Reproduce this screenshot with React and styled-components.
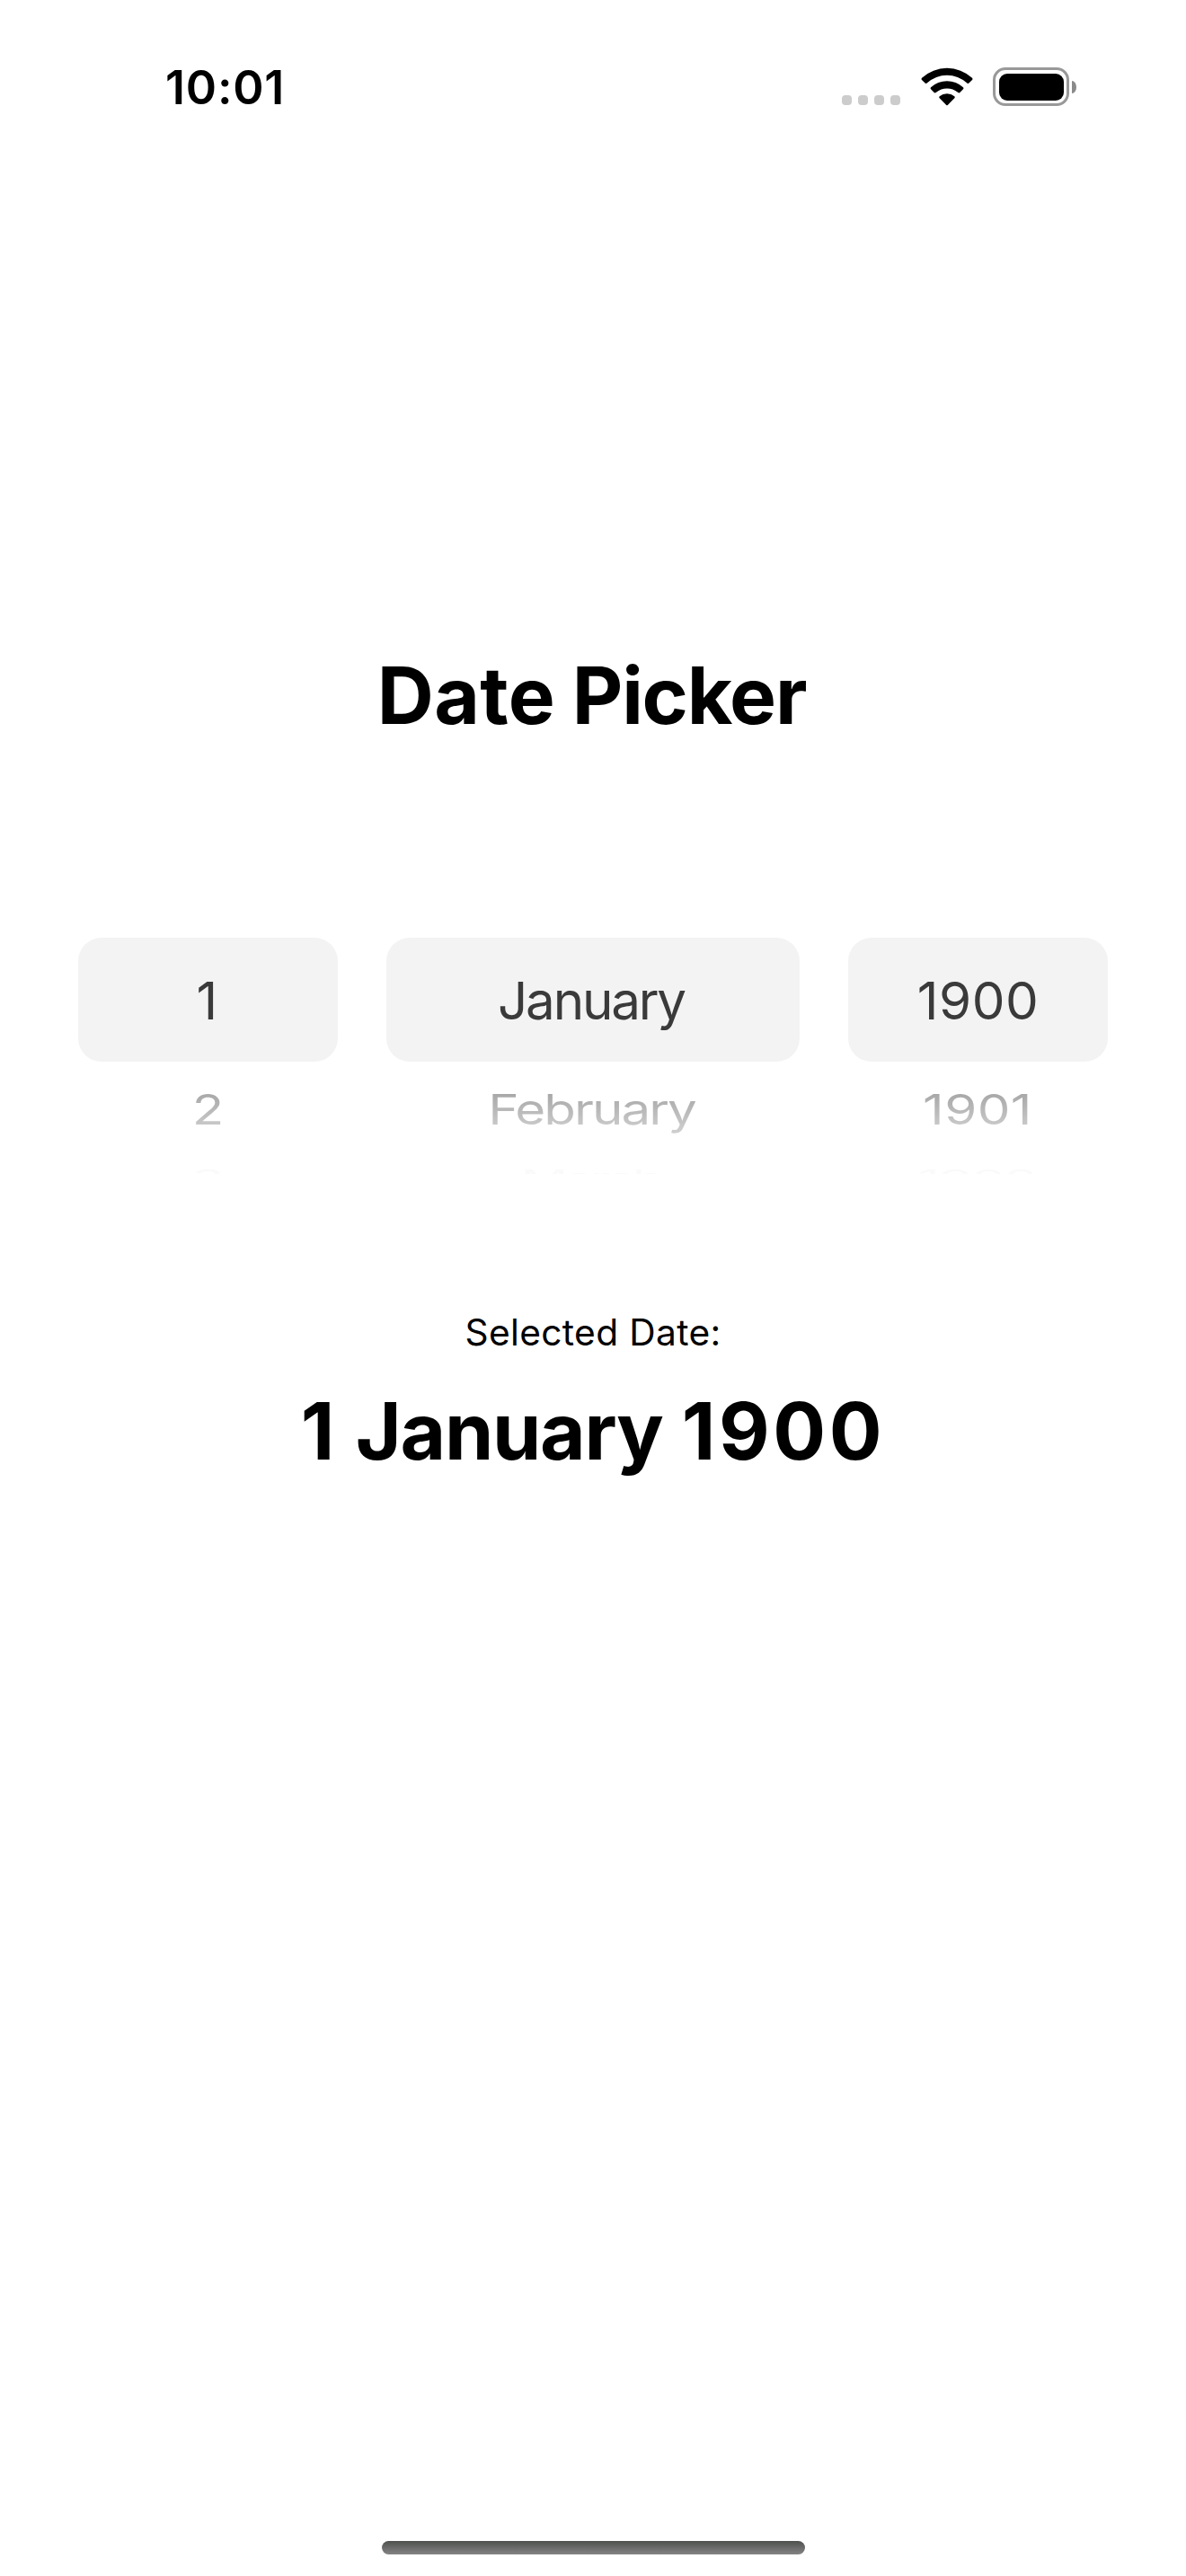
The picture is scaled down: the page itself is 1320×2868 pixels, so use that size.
import React from "react";
import styled, { createGlobalStyle } from "styled-components";

const GlobalStyle = createGlobalStyle`
  *, *::before, *::after { box-sizing: border-box; }
  body { margin: 0; background: #fff; }
`;

const Screen = styled.main`
  display: flex;
  flex-direction: column;
  align-items: center;
  width: 1320px;
  height: 2868px;
  padding-bottom: 24px;
  overflow: hidden;
  background: #fff;
  color: #000;
  font-family: Inter, "Liberation Sans", sans-serif;
`;

const StatusBar = styled.header`
  display: flex;
  align-items: center;
  justify-content: space-between;
  width: 100%;
  height: 196px;
  padding: 0 122px 0 184px;
`;

const Clock = styled.time`
  font-size: 52px;
  font-weight: 600;
  line-height: 64px;
  letter-spacing: 0.8px;
`;

const StatusIcons = styled.div`
  display: flex;
  align-items: center;
`;

const SignalDots = styled.div`
  display: flex;
  gap: 7px;
  margin: 27px 23px 0 0;
`;

const SignalDot = styled.i`
  width: 11px;
  height: 11px;
  border-radius: 4px;
  background: #ccc;
`;

const WifiIcon = styled.svg`
  width: 58px;
  height: 43px;
  margin: -3px 22px 0 0;
`;

const Battery = styled.div`
  display: flex;
  align-items: center;
  margin-top: -3px;
`;

const BatteryShell = styled.div`
  width: 85px;
  height: 43px;
  padding: 3.5px;
  border: 3.5px solid #999;
  border-radius: 14px;
`;

const BatteryLevel = styled.div`
  height: 100%;
  border-radius: 9px;
  background: #000;
`;

const BatteryCap = styled.div`
  width: 5px;
  height: 14px;
  margin-left: 3px;
  border-radius: 0 5px 5px 0 / 0 7px 7px 0;
  background: #8a8a8a;
`;

const Title = styled.h1`
  margin: 524px 3px 0 0;
  font-size: 87.3px;
  font-weight: 700;
  line-height: 108px;
`;

const Tracked = styled.span`
  letter-spacing: ${(p) => p.$by}px;
`;

const Picker = styled.section`
  display: grid;
  grid-template-columns: 289px 460px 289px;
  column-gap: 54px;
  height: 263px;
  margin-top: 216px;
  overflow: hidden;
`;

const Wheel = styled.div`
  display: flex;
  flex-direction: column;
  text-align: center;
  font-size: 58.3px;
  line-height: 72px;
  white-space: nowrap;
`;

const SelectedRow = styled.div`
  display: flex;
  flex: none;
  align-items: center;
  justify-content: center;
  height: 137.5px;
  padding-top: 2px;
  border-radius: 26px;
  background: #f3f3f3;
  color: #3a3a3a;
`;

const NextRow = styled.div`
  display: flex;
  flex: none;
  align-items: center;
  justify-content: center;
  height: 106.5px;
`;

const EdgeRow = styled(NextRow)`
  height: 45px;
  color: #fafafa;
`;

const Label = styled.span`
  margin-right: ${(p) => p.$trim || 0}px;
  letter-spacing: ${(p) => p.$by || 0}px;
`;

const NextLabel = styled(Label)`
  transform: scaleY(0.8);
  background: linear-gradient(#a8a8a8 20%, #c8c8c8 80%, #d0d0d0);
  background-clip: text;
  color: transparent;
`;

const EdgeLabel = styled(Label)`
  transform: scaleY(0.4);
`;

const Caption = styled.p`
  margin: 151.5px 0 0;
  font-size: 40.7px;
  line-height: 50px;
  letter-spacing: 0.35px;
`;

const Result = styled.p`
  margin: 30.5px 0 0;
  font-size: 87.3px;
  font-weight: 700;
  line-height: 108px;
  white-space: nowrap;
`;

const HomeIndicator = styled.div`
  width: 471px;
  height: 15px;
  margin: auto 0 0 1px;
  border-radius: 8px;
  background: linear-gradient(#4e504e, #848484);
`;

const wheels = [
  { rows: ["1", "2", "3"], by: [0, 0, 0], trim: [2.4, 0, 0] },
  { rows: ["January", "February", "March"], by: [-2.2, -2, -3.8], trim: [4, 3, 6] },
  { rows: ["1900", "1901", "1902"], by: [0.5, 0.4, 0], trim: [0, 1, 1] },
];

export default function App() {
  return (
    <Screen>
      <GlobalStyle />
      <StatusBar>
        <Clock>10:01</Clock>
        <StatusIcons>
          <SignalDots>
            <SignalDot />
            <SignalDot />
            <SignalDot />
            <SignalDot />
          </SignalDots>
          <WifiIcon viewBox="314 45 174 129" aria-hidden="true">
            <path d="M317 80A125 125 0 0 1 485 80Q488 84 485 87L475 97Q471 101 467 97A98 98 0 0 0 335 97Q331 101 327 97L317 87Q314 84 317 80Z" />
            <path d="M347 112A79 79 0 0 1 455 112Q458 115 455 118L444 129Q441 132 437 128A57 57 0 0 0 365 128Q361 132 358 129L347 118Q344 115 347 112Z" />
            <path d="M376 142A38 38 0 0 1 426 142Q429 145 426 148L404 170Q401 173 398 170L376 148Q373 145 376 142Z" />
          </WifiIcon>
          <Battery>
            <BatteryShell>
              <BatteryLevel />
            </BatteryShell>
            <BatteryCap />
          </Battery>
        </StatusIcons>
      </StatusBar>

      <Title>
        <Tracked $by={0.4}>Date</Tracked>
        <Tracked $by={-2.1}> </Tracked>
        <Tracked $by={-1.24}>Picker</Tracked>
      </Title>

      <Picker>
        {wheels.map(({ rows, by, trim }) => (
          <Wheel key={rows[0]}>
            <SelectedRow>
              <Label $by={by[0]} $trim={trim[0]}>{rows[0]}</Label>
            </SelectedRow>
            <NextRow>
              <NextLabel $by={by[1]} $trim={trim[1]}>{rows[1]}</NextLabel>
            </NextRow>
            <EdgeRow>
              <EdgeLabel $by={by[2]} $trim={trim[2]}>{rows[2]}</EdgeLabel>
            </EdgeRow>
          </Wheel>
        ))}
      </Picker>

      <Caption>Selected Date:</Caption>
      <Result>
        <Tracked $by={1.25}>1 </Tracked>
        <Tracked $by={-1.25}>January</Tracked>
        <Tracked $by={0.5}> </Tracked>
        <Tracked $by={3.6}>1900</Tracked>
      </Result>

      <HomeIndicator />
    </Screen>
  );
}
